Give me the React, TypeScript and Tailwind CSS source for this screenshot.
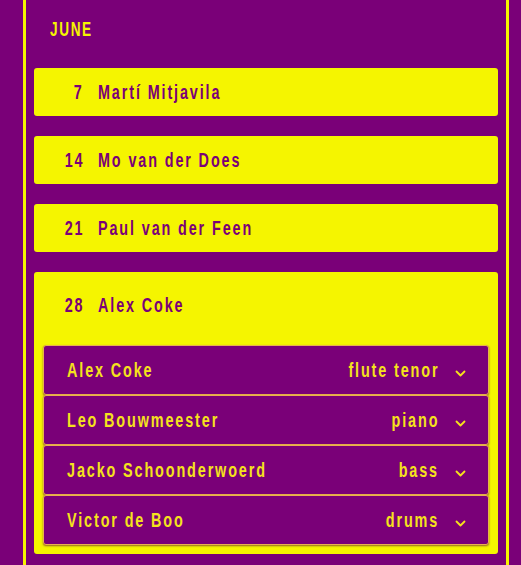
const font = {
  fontFamily: '"Liberation Sans", Arial, sans-serif',
};

const gigs = [
  { id: 1, day: 7, name: "Martí Mitjavila" },
  { id: 2, day: 14, name: "Mo van der Does" },
  { id: 3, day: 21, name: "Paul van der Feen" },
];

const band = [
  { id: 1, name: "Alex Coke", role: "flute tenor" },
  { id: 2, name: "Leo Bouwmeester", role: "piano" },
  { id: 3, name: "Jacko Schoonderwoerd", role: "bass" },
  { id: 4, name: "Victor de Boo", role: "drums" },
];

// narrow the glyphs so they read like the condensed face in the design
const Narrow = ({
  children,
  right,
}: {
  children: React.ReactNode;
  right?: boolean;
}) => (
  <span
    className={
      right
        ? "inline-block origin-right scale-x-[0.72] whitespace-nowrap"
        : "inline-block origin-left scale-x-[0.72] whitespace-nowrap"
    }
  >
    {children}
  </span>
);

const DayHeader = ({ day, name }: { day: number; name: string }) => {
  return (
    <div className="flex items-center pl-4 text-[20px] font-bold tracking-[2.6px] text-[#7a0078]">
      <span className="w-[34px] text-right">
        <Narrow right>{day}</Narrow>
      </span>
      <span className="ml-[14px]">
        <Narrow>{name}</Narrow>
      </span>
    </div>
  );
};

const Chevron = () => (
  <svg
    width="11"
    height="7"
    viewBox="0 0 11 7"
    fill="none"
    className="ml-4 mt-[6px] shrink-0"
  >
    <path
      d="M1.5 1.5l4 4l4-4"
      stroke="#f5e21c"
      strokeWidth="1.8"
      strokeLinecap="round"
      strokeLinejoin="round"
    />
  </svg>
);

const App = () => {
  return (
    <div className="min-h-[565px] bg-[#7a0078]" style={font}>
      <div className="ml-[23px] w-[486px] border-x-[3px] border-[#f5f500] px-2 pb-6">
        <h2 className="pl-4 pt-[17px] pb-[27px] text-[20px] font-bold leading-[24px] tracking-[2.4px] text-[#f5f500]">
          <span className="inline-block origin-left scale-x-[0.68]">JUNE</span>
        </h2>
        <div className="flex flex-col gap-5">
          {gigs.map((gig) => (
            <div
              key={gig.id}
              className="flex h-12 items-center rounded-[3px] bg-[#f5f500]"
            >
              <DayHeader day={gig.day} name={gig.name} />
            </div>
          ))}
          <div className="rounded-[3px] bg-[#f5f500]">
            <div className="flex h-[66px] items-center">
              <DayHeader day={28} name="Alex Coke" />
            </div>
            <div className="px-[9px] pt-[7px] pb-[9px]">
              {band.map((m) => (
                <div
                  key={m.id}
                  className="flex h-[50px] items-center rounded-[3px] border border-[#e9b24c] bg-[#7a0078] pl-[23px] pr-[22px] text-[20px] font-bold tracking-[2.6px] text-[#f5e21c] shadow-[0_1px_2px_rgba(80,0,60,0.6)]"
                >
                  <span className="flex-1">
                    <Narrow>{m.name}</Narrow>
                  </span>
                  <span>
                    <Narrow right>{m.role}</Narrow>
                  </span>
                  <Chevron />
                </div>
              ))}
            </div>
          </div>
        </div>
      </div>
    </div>
  );
};

export default App;
